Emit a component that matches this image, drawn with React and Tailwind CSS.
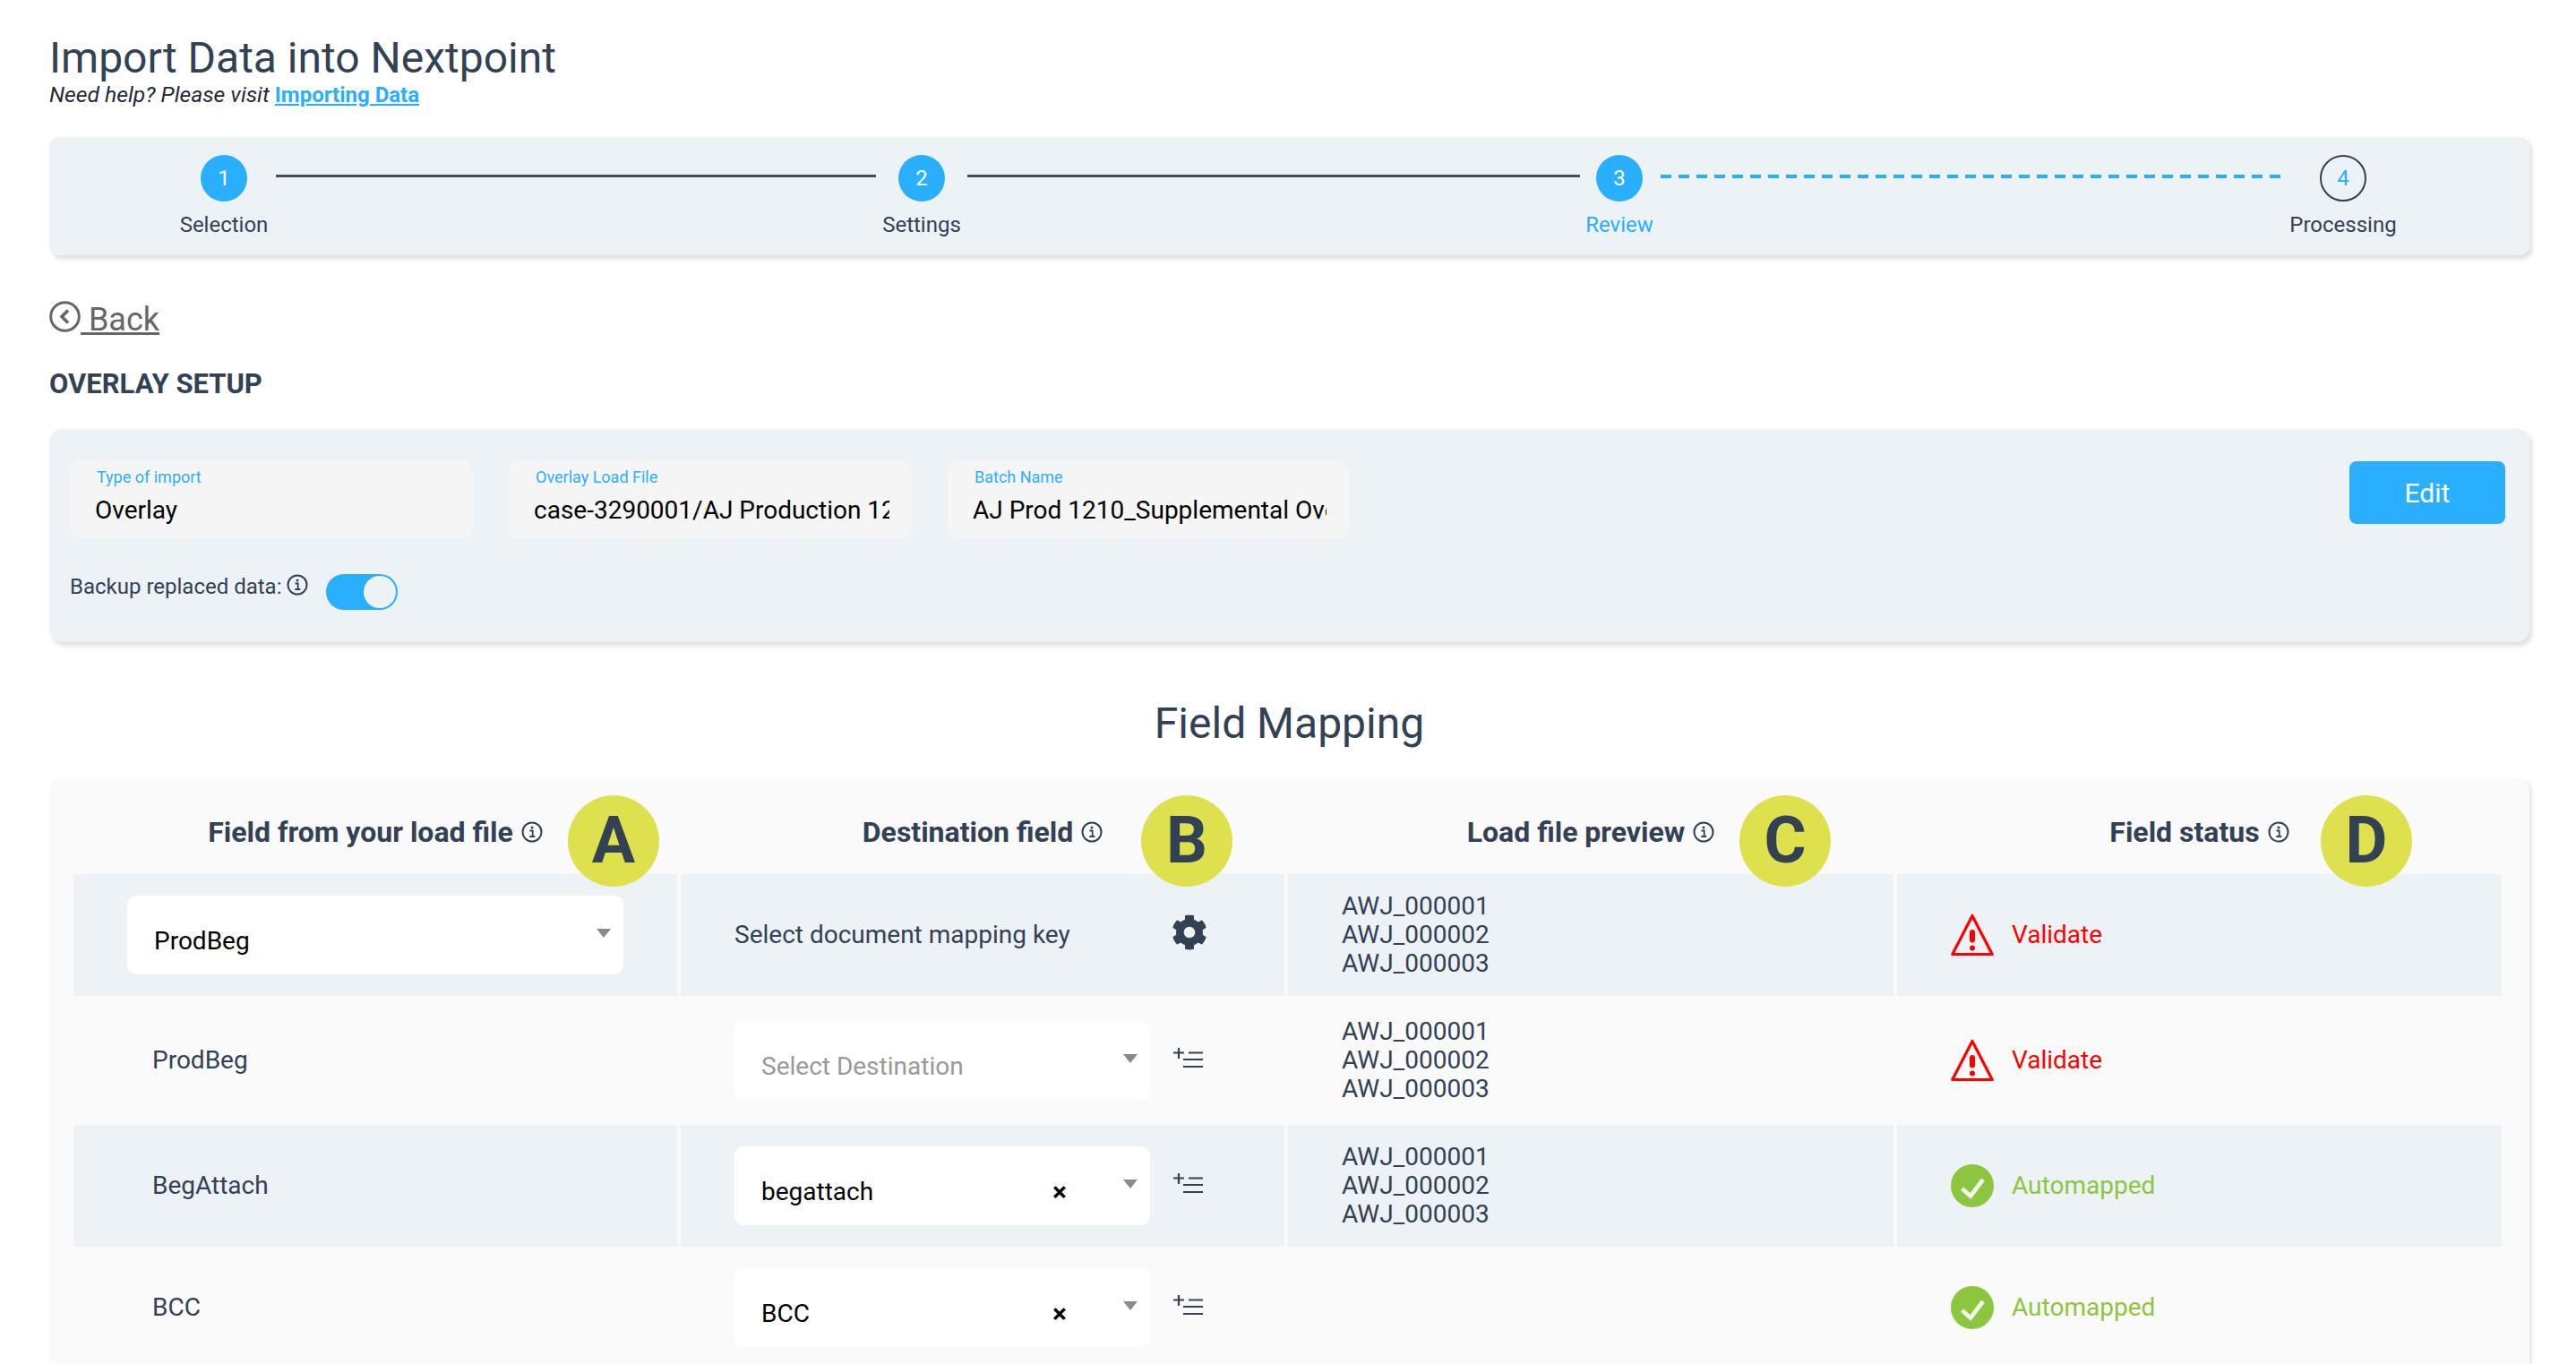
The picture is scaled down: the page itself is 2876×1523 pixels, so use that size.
import React from 'react';
import { FaCog } from 'react-icons/fa';

const InfoIcon = ({ size = 24 }) => (
  <svg width={size} height={size} viewBox="0 0 24 24" fill="none" className="shrink-0 text-[#334155]">
    <circle cx="12" cy="12" r="10.5" stroke="currentColor" strokeWidth="2" />
    <path d="M9.5 10.5h3.2v6.2M9.3 17h6" stroke="currentColor" strokeWidth="1.8" />
    <circle cx="12" cy="7" r="1.5" fill="currentColor" />
  </svg>
);

const Arrow = ({ className }) => (
  <div className={`w-0 h-0 border-l-[8px] border-r-[8px] border-t-[10px] border-l-transparent border-r-transparent border-t-[#8a8a8a] ${className}`} />
);

const ListAdd = () => (
  <svg width="33" height="23" viewBox="0 0 33 23" fill="none" className="ml-[26px] mt-[-6px] shrink-0 text-[#334155]">
    <path d="M0 5.5h12M6 0v12" stroke="currentColor" strokeWidth="2.2" />
    <path d="M17 5.5h16M11 13h22M11 21h22" stroke="currentColor" strokeWidth="2.2" />
  </svg>
);

const Warn = () => (
  <svg width="48" height="48" viewBox="0 0 48 48" fill="none" className="shrink-0">
    <path d="M24 2.5 46.2 45.5H1.8Z" stroke="#ff0000" strokeWidth="3.2" strokeLinejoin="round" />
    <rect x="21" y="18" width="6" height="14.5" rx="3" fill="#ff0000" />
    <circle cx="24" cy="38.5" r="3" fill="#ff0000" />
  </svg>
);

const Check = () => (
  <svg width="48" height="48" viewBox="0 0 48 48" fill="none" className="shrink-0">
    <circle cx="24" cy="24" r="24" fill="#8cc63f" />
    <path d="M12.5 27 22 35.5 36 17" stroke="#ffffff" strokeOpacity="0.9" strokeWidth="4.6" />
  </svg>
);

const Step = ({ n, label, active, outline }) => (
  <div className="flex flex-col items-center w-[52px] shrink-0">
    <div className={`w-[52px] h-[52px] rounded-full flex items-center justify-center text-[24px] ${outline ? 'border-2 border-[#334155] text-[#2aafff]' : 'bg-[#2aafff] text-white'}`}>
      {n}
    </div>
    <div className={`mt-[12px] text-[24px] leading-[28px] whitespace-nowrap ${active ? 'text-[#2aafff]' : 'text-[#334155]'}`}>
      {label}
    </div>
  </div>
);

const Field = ({ label, value, w }) => (
  <div className={`${w} h-[86px] bg-[#f5f5f5] rounded-[12px] pl-[28px] pr-[25px] pt-[8px] shrink-0`}>
    <div className="text-[18px] leading-[20px] text-[#2aafff] pl-[2px]">{label}</div>
    <div className="mt-[9px] text-[28px] leading-[36px] text-black overflow-hidden whitespace-nowrap">{value}</div>
  </div>
);

const Select = ({ text, muted, clear, w }) => (
  <div className={`${w} h-[88px] bg-white rounded-[10px] flex items-center pl-[30px] pr-[14px] pt-[14px] shrink-0`}>
    <span className={`flex-1 text-[28px] leading-[36px] ${muted ? 'text-[#999999]' : 'text-black'}`}>{text}</span>
    {clear && <span className="mr-[63px] text-[30px] leading-[36px] font-bold text-black">×</span>}
    <Arrow className="self-start mt-[23px]" />
  </div>
);

const Header = ({ label, letter, badge }) => (
  <div className="relative flex items-center justify-center pt-[11px] gap-[9px]">
    <span className="text-[32px] font-bold text-[#334155]">{label}</span>
    <InfoIcon />
    <div className={`absolute top-[18px] ${badge} z-10 w-[102px] h-[102px] rounded-full bg-[#dfe04d] flex items-center justify-center text-[72px] font-bold text-[#334155]`}>
      {letter}
    </div>
  </div>
);

const Status = ({ ok }) => (
  <div className="flex items-center gap-[20px] pl-[60px]">
    {ok ? <Check /> : <Warn />}
    <span className={`text-[28px] ${ok ? 'text-[#8cc63f]' : 'text-[#ff0000]'}`}>{ok ? 'Automapped' : 'Validate'}</span>
  </div>
);

const Preview = () => (
  <div className="flex flex-col justify-center pl-[60px] text-[28px] leading-[32px] text-[#334155]">
    <div>AWJ_000001</div>
    <div>AWJ_000002</div>
    <div>AWJ_000003</div>
  </div>
);

const Row = ({ shaded, h, children }) => (
  <div className={`grid grid-cols-[674px_674px_676px_675px] gap-x-[4px] ${h}`}>
    {React.Children.map(children, (cell) => (
      <div className={`flex items-center min-w-0 ${shaded ? 'bg-[#edf2f6]' : ''}`}>{cell}</div>
    ))}
  </div>
);

export default function App() {
  return (
    <div className="h-[1523px] overflow-hidden bg-white pl-[55px] pr-[52px] pt-[37px] text-[#334155] [font-family:Roboto,sans-serif]">
      <h1 className="text-[48px] leading-[56px]">Import Data into Nextpoint</h1>
      <p className="mt-[1px] text-[24.7px] leading-[24px] italic text-[#1f2937]">
        Need help? Please visit <a className="not-italic font-bold text-[24px] text-[#2aafff] underline">Importing Data</a>
      </p>

      {/* stepper */}
      <div className="mt-[35px] h-[132px] rounded-[10px] bg-[#edf2f6] shadow-[3px_4px_5px_rgba(0,0,0,0.13)] flex items-start pl-[169px] pt-[20px]">
        <Step n={1} label="Selection" />
        <div className="ml-[32px] mr-[25px] mt-[22px] h-[3px] w-[670px] bg-[#3f4c5e]" />
        <Step n={2} label="Settings" />
        <div className="ml-[25px] mr-[18px] mt-[22px] h-[3px] w-[684px] bg-[#3f4c5e]" />
        <Step n={3} label="Review" active />
        <div className="ml-[20px] mr-[40px] mt-[22px] h-[4px] w-[696px] bg-[repeating-linear-gradient(90deg,#2aafff_0,#2aafff_12px,transparent_12px,transparent_20px)]" />
        <Step n={4} label="Processing" outline />
      </div>

      {/* back */}
      <div className="mt-[50px] flex items-center h-[36px] text-[#666666]">
        <svg width="35" height="35" viewBox="0 0 35 35" fill="none" className="shrink-0">
          <circle cx="17.5" cy="17.5" r="15.8" stroke="currentColor" strokeWidth="3" />
          <path d="M21 10.5 14 17.5l7 7" stroke="currentColor" strokeWidth="3.6" />
        </svg>
        <a className="translate-y-[4px] text-[36px] leading-[36px] underline">&nbsp;Back</a>
      </div>

      <h2 className="mt-[40px] text-[31px] leading-[36px] font-bold text-[#334155]">OVERLAY SETUP</h2>

      {/* overlay panel */}
      <div className="mt-[32px] h-[238px] rounded-[14px] bg-[#edf2f6] shadow-[3px_4px_5px_rgba(0,0,0,0.13)] pl-[23px] pr-[27px] pt-[36px]">
        <div className="flex gap-[40px]">
          <Field w="w-[450px]" label="Type of import" value="Overlay" />
          <Field w="w-[450px]" label="Overlay Load File" value="case-3290001/AJ Production 12" />
          <Field w="w-[448px]" label="Batch Name" value="AJ Prod 1210_Supplemental Ove" />
          <button className="ml-auto w-[174px] h-[70px] rounded-[8px] bg-[#2aafff] text-white text-[30px]">Edit</button>
        </div>
        <div className="mt-[40px] flex items-start">
          <span className="text-[24px] leading-[28px]">Backup replaced data:</span>
          <span className="ml-[6px]"><InfoIcon /></span>
          <div className="ml-[20px] w-[80px] h-[40px] rounded-full bg-[#2aafff] flex items-center justify-end pr-[2px]">
            <div className="w-[36px] h-[36px] rounded-full bg-[#edf2f6]" />
          </div>
        </div>
      </div>

      <h2 className="mt-[63px] mb-[34px] text-center text-[48px] leading-[56px] text-[#334155]">Field Mapping</h2>

      {/* mapping table */}
      <div className="rounded-t-[14px] bg-[#fafafa] shadow-[4px_0_5px_-2px_rgba(0,0,0,0.12)] pl-[27px] pr-[31px]">
        <div className="grid grid-cols-[674px_674px_676px_675px] gap-x-[4px] h-[106px]">
          <Header label="Field from your load file" letter="A" badge="left-[552px]" />
          <Header label="Destination field" letter="B" badge="left-[514px]" />
          <Header label="Load file preview" letter="C" badge="left-[504px]" />
          <Header label="Field status" letter="D" badge="left-[473px]" />
        </div>

        <Row shaded h="h-[136px]">
          <div className="pl-[60px]"><Select w="w-[554px]" text="ProdBeg" /></div>
          <div className="flex items-center pl-[60px]">
            <span className="w-[464px] text-[28px] shrink-0">Select document mapping key</span>
            <FaCog className="ml-[24px] mt-[-6px] text-[40px] text-[#334155]" />
          </div>
          <Preview />
          <Status />
        </Row>

        <Row h="h-[144px]">
          <span className="pl-[88px] text-[28px]">ProdBeg</span>
          <div className="flex items-center pl-[60px]">
            <Select w="w-[464px]" text="Select Destination" muted />
            <ListAdd />
          </div>
          <Preview />
          <Status />
        </Row>

        <Row shaded h="h-[136px]">
          <span className="pl-[88px] text-[28px]">BegAttach</span>
          <div className="flex items-center pl-[60px]">
            <Select w="w-[464px]" text="begattach" clear />
            <ListAdd />
          </div>
          <Preview />
          <Status ok />
        </Row>

        <Row h="h-[136px]">
          <span className="pl-[88px] text-[28px]">BCC</span>
          <div className="flex items-center pl-[60px]">
            <Select w="w-[464px]" text="BCC" clear />
            <ListAdd />
          </div>
          <div />
          <Status ok />
        </Row>
      </div>
    </div>
  );
}
